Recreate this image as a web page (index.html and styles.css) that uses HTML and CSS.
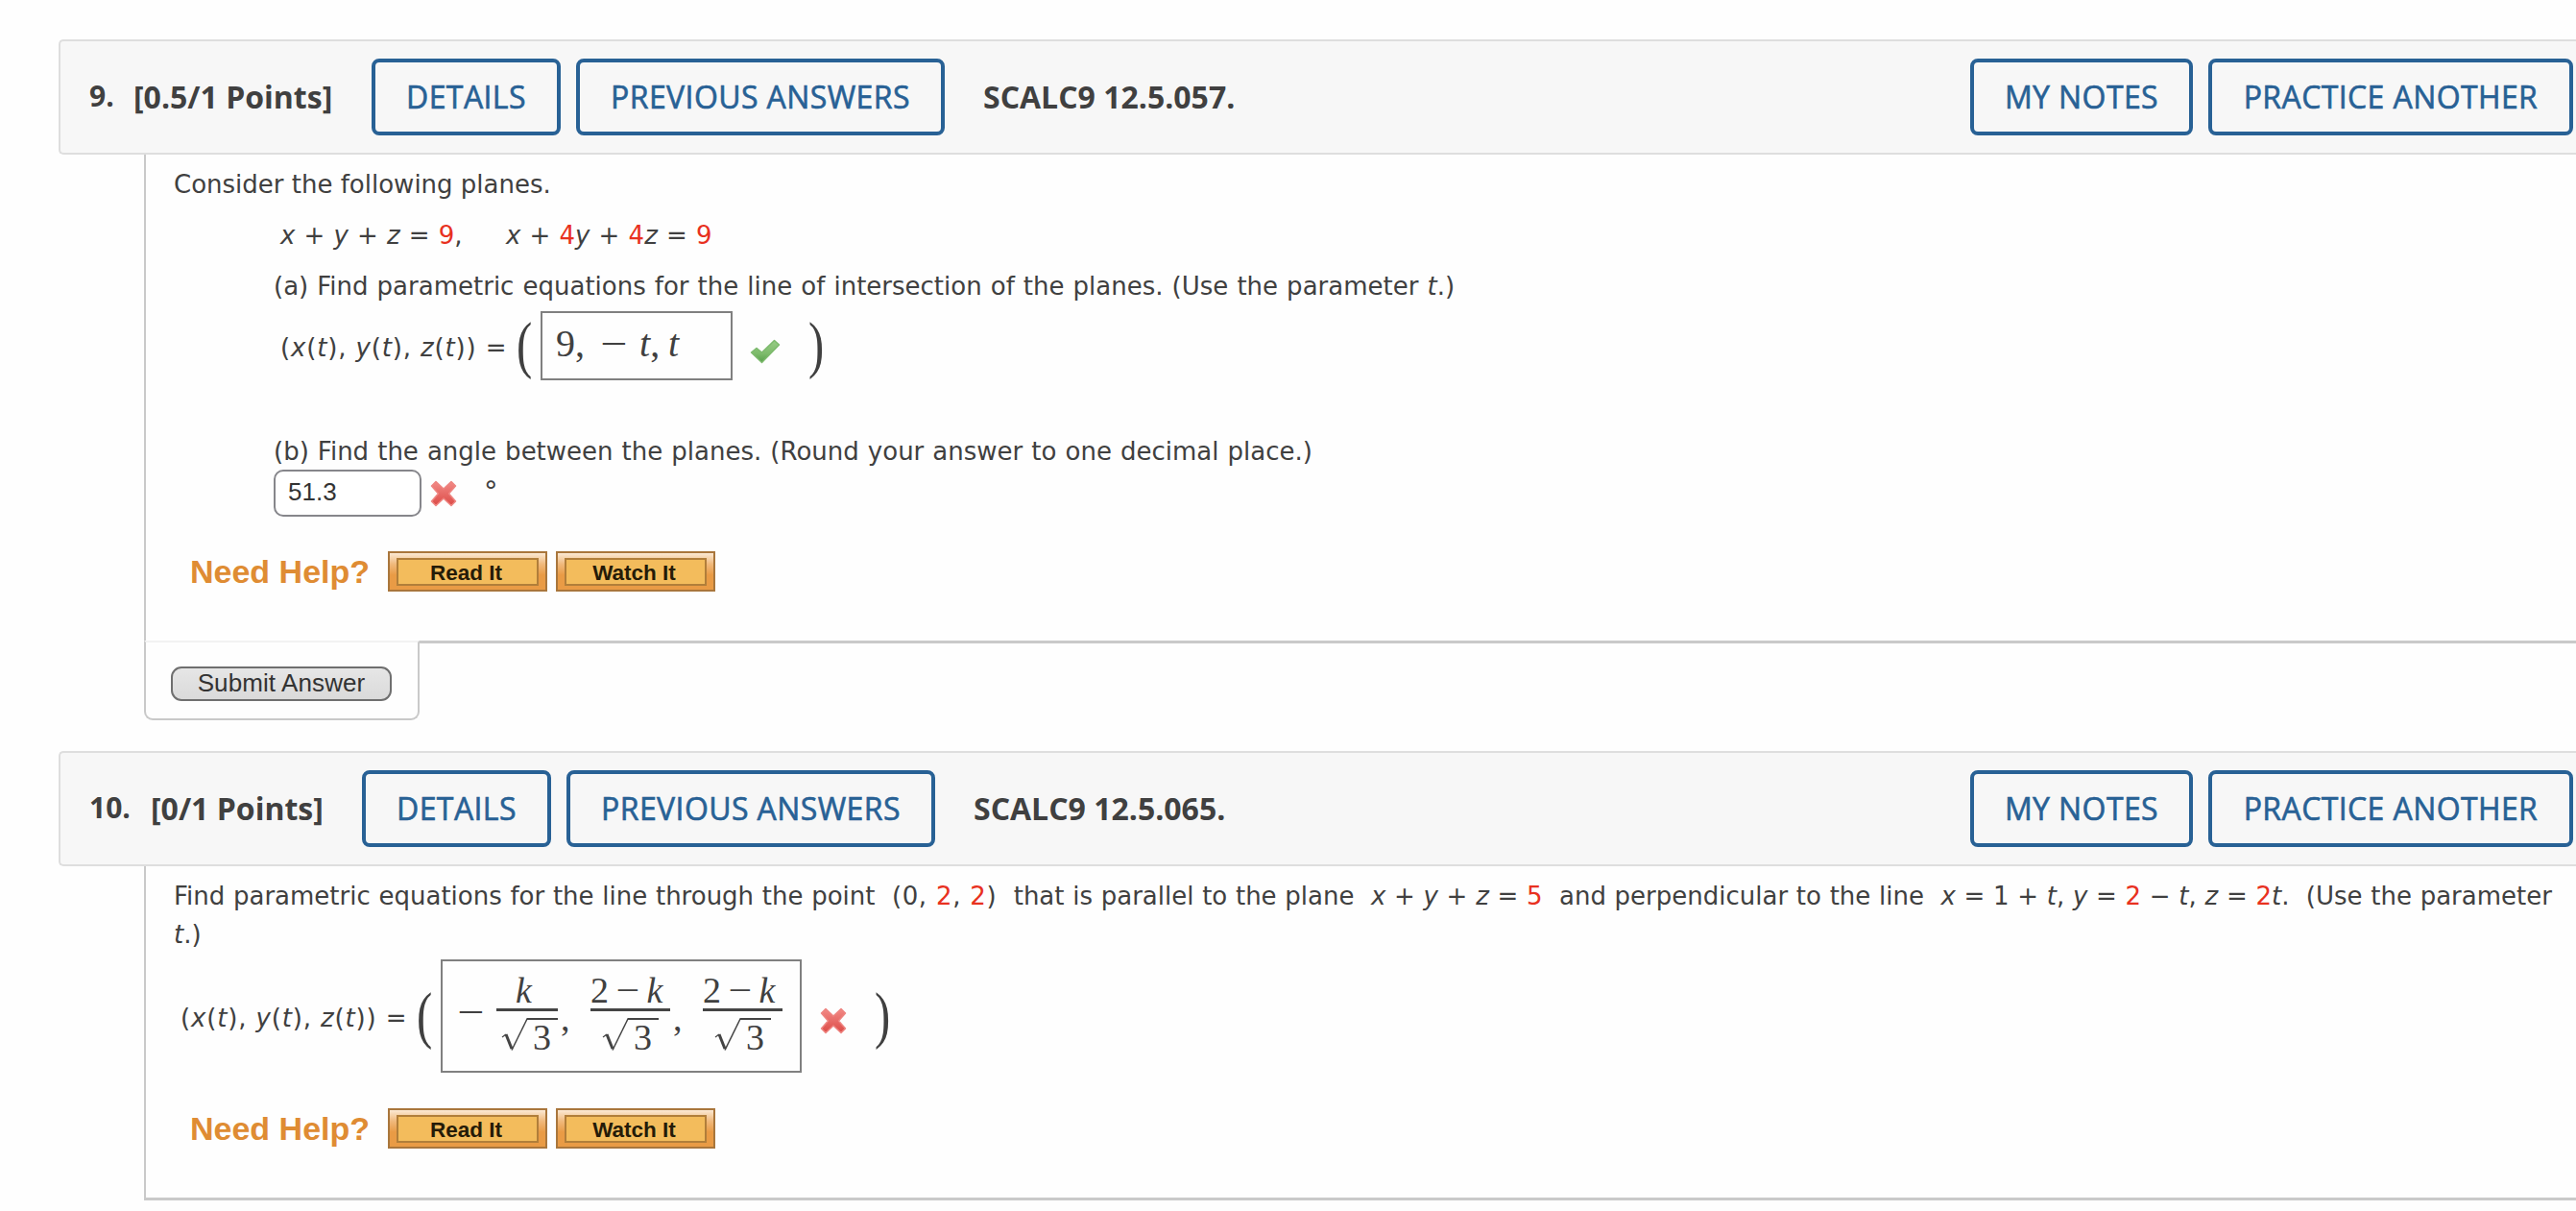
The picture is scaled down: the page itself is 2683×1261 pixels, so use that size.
FILE: index.html
```
<!DOCTYPE html>
<html lang="en">
<head>
  <meta charset="UTF-8">
  <title>12.5 Homework</title>
  <link rel="stylesheet" href="styles.css">
</head>
<body>
  <!-- icons used by the answer marks -->
  <svg class="defs" width="0" height="0">
    <defs>
      <linearGradient id="green" x1="0" y1="0" x2="0" y2="1">
        <stop offset="0" stop-color="#98cc86"/>
        <stop offset="0.600" stop-color="#7dbb6b"/>
        <stop offset="1" stop-color="#579f4a"/>
      </linearGradient>
      <linearGradient id="red" x1="0" y1="0" x2="0" y2="1">
        <stop offset="0" stop-color="#f28a86"/>
        <stop offset="1" stop-color="#dc4a46"/>
      </linearGradient>
      <symbol id="check" viewBox="0 0 32 26">
        <path d="M1.500 14 L7 9.500 L12.500 14 L25.500 1.500 L30.500 6 L12.500 24.500 Z" fill="url(#green)" stroke="#7dba6d" stroke-width="1.500" stroke-linejoin="round"/>
      </symbol>
      <symbol id="cross" viewBox="0 0 28 28">
        <path d="M6 1.500 L14 9 L22 1.500 L26.500 6 L19.500 14 L26.500 22 L22 26.500 L14 19 L6 26.500 L1.500 22 L8.500 14 L1.500 6 Z" fill="url(#red)" stroke="#ee8480" stroke-width="1.500" stroke-linejoin="round"/>
      </symbol>
      <symbol id="radical" viewBox="0 0 59 36">
        <path d="M1 21 L5 18" fill="none" stroke="#444" stroke-width="1.200"/>
        <path d="M5 18 L11 33" fill="none" stroke="#444" stroke-width="3"/>
        <path d="M11 34.500 L27 2" fill="none" stroke="#444" stroke-width="1.500"/>
        <path d="M26.500 2 H59" fill="none" stroke="#444" stroke-width="2"/>
      </symbol>
    </defs>
  </svg>

  <section class="question q9">
    <div class="header">
      <span class="number">9.</span>
      <span class="points">[0.5/1 Points]</span>
      <a class="btn details">DETAILS</a>
      <a class="btn previous">PREVIOUS ANSWERS</a>
      <span class="source">SCALC9 12.5.057.</span>
      <a class="btn notes">MY NOTES</a>
      <a class="btn practice">PRACTICE ANOTHER</a>
    </div>
    <div class="content">
      <p class="intro">Consider the following planes.</p>
      <div class="indent">
        <div class="equation">
          <span class="eq-first"><i>x</i> + <i>y</i> + <i>z</i> = <b>9</b>,</span>
          <span><i>x</i> + <b>4</b><i>y</i> + <b>4</b><i>z</i> = <b>9</b></span>
        </div>
        <p class="part-a">(a) Find parametric equations for the line of intersection of the planes. (Use the parameter <i>t</i>.)</p>
        <div class="vector">
          <span class="lhs">(<i>x</i>(<i>t</i>), <i>y</i>(<i>t</i>), <i>z</i>(<i>t</i>)) =</span>
          <span class="paren">(</span>
          <div class="box box-line">
            <span class="m-nine">9,</span><span class="m-minus"><span class="wide">−</span></span><span class="m-t"><i>t</i>,</span><span><i>t</i></span>
          </div>
          <svg class="icon-check"><use href="#check"/></svg>
          <span class="paren close">)</span>
        </div>
        <p class="part-b">(b) Find the angle between the planes. (Round your answer to one decimal place.)</p>
        <div class="angle">
          <span class="field">51.3</span>
          <svg class="icon-cross"><use href="#cross"/></svg>
          <span class="degree">°</span>
        </div>
      </div>
      <div class="help">
        <span class="help-title">Need Help?</span>
        <a class="help-btn"><span>Read It</span></a>
        <a class="help-btn"><span>Watch It</span></a>
      </div>
    </div>
    <div class="submit-tab">
      <div class="submit">Submit Answer</div>
    </div>
  </section>

  <section class="question q10">
    <div class="header">
      <span class="number">10.</span>
      <span class="points">[0/1 Points]</span>
      <a class="btn details">DETAILS</a>
      <a class="btn previous">PREVIOUS ANSWERS</a>
      <span class="source">SCALC9 12.5.065.</span>
      <a class="btn notes">MY NOTES</a>
      <a class="btn practice">PRACTICE ANOTHER</a>
    </div>
    <div class="content">
      <p class="long">Find parametric equations for the line through the point &nbsp;<span class="point">(0, <b>2</b>, <b>2</b>)</span>&nbsp; that is parallel to the plane &nbsp;<i>x</i> + <i>y</i> + <i>z</i> = <b>5</b>&nbsp; and perpendicular to the line &nbsp;<i>x</i> = 1 + <i>t</i>, <i>y</i> = <b>2</b> − <i>t</i>, <i>z</i> = <b>2</b><i>t</i>.&nbsp; (Use the parameter<br><i>t</i>.)</p>
      <div class="vector">
        <span class="lhs">(<i>x</i>(<i>t</i>), <i>y</i>(<i>t</i>), <i>z</i>(<i>t</i>)) =</span>
        <span class="paren">(</span>
        <div class="box box-frac">
          <span class="lead-minus"><span class="wide">−</span></span>
          <div class="frac narrow">
            <div class="num"><i>k</i></div>
            <div class="den"><svg><use href="#radical"/></svg><span>3</span></div>
          </div>
          <span class="comma">,</span>
          <div class="frac">
            <div class="num">2<span class="minus">−</span><i>k</i></div>
            <div class="den"><svg><use href="#radical"/></svg><span>3</span></div>
          </div>
          <span class="comma">,</span>
          <div class="frac">
            <div class="num">2<span class="minus">−</span><i>k</i></div>
            <div class="den"><svg><use href="#radical"/></svg><span>3</span></div>
          </div>
        </div>
        <svg class="icon-cross"><use href="#cross"/></svg>
        <span class="paren close">)</span>
      </div>
      <div class="help">
        <span class="help-title">Need Help?</span>
        <a class="help-btn"><span>Read It</span></a>
        <a class="help-btn"><span>Watch It</span></a>
      </div>
    </div>
  </section>
</body>
</html>
```

FILE: styles.css
```
* {
  box-sizing: border-box;
}

body {
  margin: 0;
  padding-top: 41px;
  background: #fefefe;
  color: #404040;
  font-family: Verdana, "DejaVu Sans", sans-serif;
  font-size: 26px;
  line-height: 40px;
  overflow: hidden;
  white-space: nowrap;
}

p {
  margin: 0;
}

b {
  color: #e8311f;
  font-weight: normal;
}

svg {
  flex: none;
}

.defs {
  display: block;
}

/* header bar */
.header {
  display: flex;
  align-items: center;
  height: 120px;
  margin-left: 61px;
  padding-left: 30px;
  border: 2px solid #dedede;
  border-right: none;
  border-radius: 5px 0 0 5px;
  background: #f7f7f7;
  font-family: "Open Sans", sans-serif;
  font-size: 32px;
  font-weight: bold;
}

.number {
  width: 46px;
  font-size: 30px;
  margin-top: -3px;
}

.points {
  width: 248px;
}

.btn {
  height: 80px;
  border: 4px solid #286195;
  border-radius: 8px;
  color: #286195;
  font-weight: 500;
  letter-spacing: 0.4px;
  line-height: 72px;
  text-align: center;
  -webkit-text-stroke: 0.6px #286195;
}

.details {
  width: 197px;
  margin-right: 16px;
}

.previous {
  width: 384px;
}

.source {
  margin-left: 40px;
}

.notes {
  width: 232px;
  margin-left: auto;
  margin-right: 16px;
}

.practice {
  width: 380px;
  margin-right: 3px;
}

.q10 .number {
  width: 64px;
}

.q10 .points {
  width: 220px;
}

/* question body */
.content {
  margin-left: 150px;
  padding: 11px 0 0 29px;
  border-left: 2px solid #c9c9c9;
  border-bottom: 3px solid #c9c9c9;
}

.q9 .content {
  height: 509px;
}

.q10 .content {
  height: 348px;
}

.indent {
  padding-left: 104px;
}

.equation {
  display: flex;
  margin: 13px 0;
  padding-left: 7px;
  word-spacing: 0.9px;
}

.eq-first {
  width: 235px;
}

.part-a,
.part-b {
  word-spacing: 0.8px;
}

.long {
  word-spacing: 0.45px;
}

.point {
  letter-spacing: 0.6px;
}

.vector {
  display: flex;
  align-items: center;
}

.q9 .vector {
  height: 72px;
  margin: 6px 0 54px;
  padding-left: 7px;
}

.q10 .vector {
  height: 118px;
  margin-top: 6px;
  padding-left: 7px;
}

.lhs {
  width: 246px;
  padding-top: 4px;
  letter-spacing: 0.85px;
}

.paren {
  width: 25px;
  font-family: "Liberation Serif", serif;
  font-size: 65px;
  line-height: 66px;
  margin-top: -3px;
  transform: scaleX(0.75);
  transform-origin: left;
}

.box {
  display: flex;
  border: 2px solid #808080;
  font-family: "Liberation Serif", serif;
}

.box-line {
  width: 200px;
  height: 72px;
  padding: 12px 0 0 14px;
  font-size: 40px;
}

.m-nine {
  width: 49px;
}

.m-minus {
  width: 38px;
}

.m-t {
  width: 30px;
}

.wide {
  display: inline-block;
  transform: scaleX(1.25);
}

.icon-check {
  width: 32px;
  height: 26px;
  margin: 12px 29px 0 18px;
}

.icon-cross {
  width: 28px;
  height: 28px;
}

.part-b {
  margin-bottom: -1px;
}

.angle {
  display: flex;
  height: 49px;
}

.field {
  width: 154px;
  height: 49px;
  padding-left: 13px;
  border: 2px solid #86868b;
  border-radius: 10px;
  background: #fff;
  color: #333;
  font-family: "Liberation Sans", sans-serif;
  line-height: 43px;
}

.angle .icon-cross {
  margin: 11px 28px 0 9px;
}

.degree {
  font-size: 29px;
  line-height: 45px;
}

/* help links */
.help {
  display: flex;
  gap: 9px;
  height: 42px;
  margin-top: 36px;
  padding-left: 17px;
  font-family: "Liberation Sans", sans-serif;
  font-weight: bold;
}

.q10 .help {
  margin-top: 37px;
}

.help-title {
  width: 197px;
  color: #df8c33;
  font-size: 34px;
  line-height: 42px;
}

.help-btn {
  width: 166px;
  height: 42px;
  padding: 5px 7px;
  border: 2px solid #a9763c;
  background: linear-gradient(#fbe9d3, #f0b97c 30%, #e99b45 60%, #e99b45);
  color: #251b08;
  font-size: 22.5px;
  text-align: center;
}

.help-btn span {
  display: block;
  height: 29px;
  padding-right: 3px;
  border: 2px solid #b17e3a;
  background: #f3bc5c;
  line-height: 27px;
}

/* submit */
.submit-tab {
  position: relative;
  width: 287px;
  height: 83px;
  margin: -3px 0 32px 150px;
  padding: 25px 0 0 26px;
  border: 2px solid #c9c9c9;
  border-top-color: #f2f2f2;
  border-radius: 0 0 9px 9px;
  background: #fefefe;
}

.submit {
  width: 230px;
  height: 36px;
  border: 2px solid #6f6f6f;
  border-radius: 11px;
  background: linear-gradient(#e6e6e6, #dadada);
  color: #333;
  font-family: "Liberation Sans", sans-serif;
  letter-spacing: 0.1px;
  line-height: 31px;
  text-align: center;
}

/* fractions */
.box-frac {
  width: 376px;
  height: 118px;
  padding: 16px 0 0 18px;
  font-size: 38px;
}

.lead-minus {
  width: 38px;
  padding-top: 17px;
  font-size: 40px;
}

.frac {
  width: 83px;
}

.frac.narrow {
  width: 64px;
}

.num {
  height: 36px;
  border-bottom: 3px solid #444;
  line-height: 29px;
}

.narrow .num {
  padding-right: 7px;
  text-align: center;
}

.minus {
  display: inline-block;
  margin: 0 9px;
  transform: scaleX(1.15);
}

.den {
  display: flex;
  height: 46px;
  padding: 6px 0 0 12px;
}

.narrow .den {
  padding-left: 5px;
}

.den svg {
  width: 59px;
  height: 36px;
  margin-right: -26px;
}

.den span {
  line-height: 42px;
}

.comma {
  width: 34px;
  padding: 23px 0 0 3px;
}

.q10 .icon-cross {
  margin: 9px 29px 0 19px;
}
```
